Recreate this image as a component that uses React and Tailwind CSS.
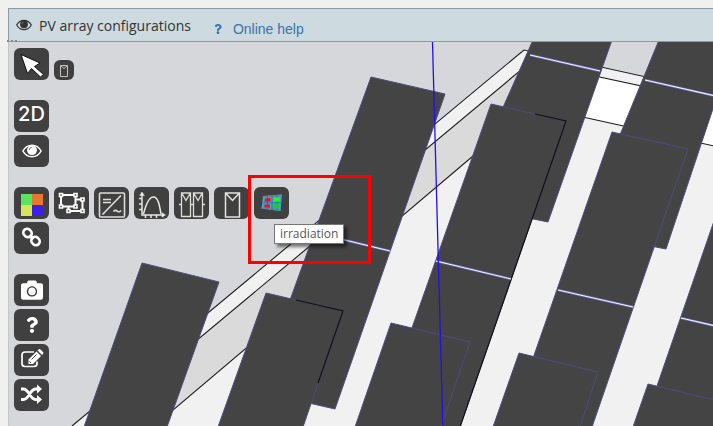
import { FaCamera, FaQuestion } from 'react-icons/fa';

const tables = [
    { points: '533,40 612,40 548,222 460,204', seam: [530, 55, 600, 71] },
    { points: '659,40 736,40 666,249 580,232', seam: [645, 80, 720, 97] },
    { points: '714,221 800,240 740,420 657,386', seam: [681, 318, 750, 334] },
    { points: '371,77 445,94 335,409 257,391', seam: [316, 233, 390, 251] },
    { points: '491,104 566,121 460,427 377,427', seam: [436, 261, 511, 279], dark: '535,114 566,121 460,427' },
    { points: '612,132 688,149 592,427 509,427', seam: [558, 290, 633, 307] },
    { points: '142,263 219,282 167,427 84,427' },
    { points: '266,293 343,311 303,427 218,427', dark: '296,300 343,311 318,383' },
    { points: '391,323 470,342 441,427 355,427' },
    { points: '519,353 598,372 580,427 493,427' },
    { points: '648,384 760,411 754,427 633,427' },
];

function RoofScene() {
    return (
        <svg
            className="absolute inset-0 h-full w-full"
            viewBox="9 42 704 384"
            preserveAspectRatio="xMinYMin slice"
            role="img"
            aria-label="PV array 3D view"
        >
            {/* roof surfaces */}
            <polygon points="524,50 72,426 713,426 800,426 800,111" fill="#f1f1f1" />
            <polygon points="524,67 94,426 153,426 524,112" fill="#dadada" />
            <polygon points="560,68 800,120 800,164 560,112" fill="#ffffff" />
            <g fill="none" stroke="#1c1c1c" strokeWidth="1.1">
                <path d="M72 426L524 50L800 111" />
                <path d="M94 426L524 67.5L560 68.5L800 120" />
                <path d="M153 427L473 156L524 112" />
                <path d="M560 112L800 165" />
            </g>

            {/* module tables, back to front */}
            {tables.map((table) => (
                <g key={table.points}>
                    <polygon points={table.points} fill="#444444" stroke="#4b4d80" strokeWidth="1" />
                    {table.dark && <polyline points={table.dark} fill="none" stroke="#101014" strokeWidth="1.2" />}
                    {table.seam && (
                        <g>
                            <line x1={table.seam[0]} y1={table.seam[1]} x2={table.seam[2]} y2={table.seam[3]} stroke="#6468ad" strokeWidth="2.4" />
                            <line x1={table.seam[0]} y1={table.seam[1]} x2={table.seam[2]} y2={table.seam[3]} stroke="#f4f4ff" strokeWidth="1.1" />
                        </g>
                    )}
                </g>
            ))}

            {/* north axis */}
            <path d="M432.5 42L437.5 230L442.8 426" fill="none" stroke="#2410e0" strokeWidth="1.3" />
        </svg>
    );
}

function ToolButton({ label, children }) {
    return (
        <button type="button" aria-label={label} className="flex h-8 w-[35px] shrink-0 cursor-pointer items-center justify-center rounded-md bg-[#404040] text-white">
            {children}
        </button>
    );
}

function CursorIcon() {
    return (
        <svg viewBox="0 0 35 32" className="h-8 w-[35px]">
            <path d="M7 6.5L26 15L20.5 18.5L29.5 26.5L26.500 29L17.500 20.500L13.500 25.500Z" fill="#fff" stroke="#111" strokeWidth="1" strokeLinejoin="round" />
        </svg>
    );
}

function EyeIcon({ className }) {
    return (
        <svg viewBox="0 0 20 14" className={className}>
            <path d="M.9 7C3 3.2 6.2 1.2 10 1.2S17 3.2 19.1 7C17 10.8 13.8 12.8 10 12.8S3 10.8 .9 7Z" fill="none" stroke="currentColor" strokeWidth="1.5" />
            <circle cx="10" cy="6.2" r="4.9" fill="currentColor" />
            <path d="M7.3 6A2.8 2.8 0 0 1 9.9 3.4" fill="none" stroke="#777" strokeWidth="1" />
        </svg>
    );
}

function PaletteIcon() {
    return (
        <svg viewBox="0 0 35 32" className="h-8 w-[35px]">
            <path d="M7 7h11v11H7z" fill="#58e55e" />
            <path d="M18 7h11v11H18z" fill="#e5792f" />
            <path d="M7 18h11v11H7z" fill="#d8e558" />
            <path d="M18 18h11v11H18z" fill="#3c20e5" />
        </svg>
    );
}

function GroupIcon() {
    return (
        <svg viewBox="0 0 35 32" className="h-8 w-[35px]" fill="none" stroke="#fff">
            <path d="M7 8H21.5V19.500H7ZM21.500 12.500H28.500V24H14.500V19.500" strokeWidth="2" />
            <g fill="#404040" strokeWidth="1.6">
                <path d="M5.500 6.500h3v3h-3zM20 6.500h3v3h-3zM5.500 18h3v3h-3zM20 18h3v3h-3zM27 11h3v3h-3zM27 22.500h3v3h-3zM13 22.500h3v3h-3z" />
            </g>
        </svg>
    );
}

function InverterIcon() {
    return (
        <svg viewBox="0 0 35 32" className="h-8 w-[35px]" fill="none" stroke="#deded8" strokeWidth="1.6">
            <rect x="5.5" y="6" width="25" height="24" rx="1" />
            <path d="M8.5 27.5L27 8.5M9 12.5H17M9 15.5H17" />
            <path d="M19.5 24.5C21 22.5 22.5 23.5 23.5 24.3S26 25 27 23.5" />
        </svg>
    );
}

function CurveIcon() {
    return (
        <svg viewBox="0 0 35 32" className="h-8 w-[35px]" fill="none" stroke="#e8e8e2" strokeWidth="1.5">
            <path d="M8 6V28H30M5 11.5H8M5 17H8M5 22.5H8M11.5 28V31M17 28V31M22.5 28V31" />
            <path d="M5.7 8.5L8 5L10.3 8.5ZM28 25.8L31.5 28L28 30.2Z" fill="#e8e8e2" strokeWidth=".5" />
            <path d="M9.5 27C12 17 15 10 19.5 10S25.5 18 27 27" />
        </svg>
    );
}

function StringIcon() {
    return (
        <svg viewBox="0 0 35 32" className="h-8 w-[35px]" fill="none" stroke="#deded8" strokeWidth="1.3">
            <path d="M7.5 6H16.5V29.5H7.5ZM19.5 6H28.5V29.5H19.5ZM8 6.5L12 13.5L16 6.5M20 6.5L24 13.5L28 6.5M5 17.5H7.5M16.5 17.5H19.5M28.5 17.5H31" />
        </svg>
    );
}

function ModuleIcon() {
    return (
        <svg viewBox="0 0 35 32" className="h-8 w-[35px]" fill="none" stroke="#e4e4e0" strokeWidth="1.5">
            <path d="M11.5 6H25.5V30H11.5ZM12 6.5L18.5 13.5L25 6.5" />
        </svg>
    );
}

function SmallModuleIcon() {
    return (
        <svg viewBox="0 0 20 20" className="h-5 w-5" fill="none" stroke="#c4c4c4" strokeWidth="1">
            <path d="M6.5 5.5H13.5V16.5H6.5ZM7 6L10 8.5L13 6" />
        </svg>
    );
}

function IrradiationIcon() {
    return (
        <svg viewBox="0 0 35 32" className="h-8 w-[35px]">
            <path d="M9 9L28 7.5L26.5 24L7.500 21.500Z" fill="#3fa9cf" />
            <path d="M9 9L28 7.500L27.800 9.500L8.800 10.500ZM7.700 20L26.700 22.500L26.500 24L7.500 21.500Z" fill="#6585a3" />
            <path d="M13.5 9V22M18 8.500V23M23 8V23.500M8.500 15.800H27.300" stroke="#2e6f92" strokeWidth=".8" />
            <path d="M11 11.500L16.500 11V14.500L10.500 14.800ZM10.500 17.500H16V20.800L10.200 20.300Z" fill="#f00f2b" />
            <path d="M19.500 10.800L25.800 10.200L25.500 14L19.500 14.400Z" fill="#28f02d" />
            <path d="M19.500 17L25.300 17.300L24.800 21.500L19.300 21Z" fill="#1fc927" />
        </svg>
    );
}

function ChainIcon() {
    return (
        <svg viewBox="0 0 35 32" className="h-8 w-[35px]" fill="none" stroke="#fff" strokeWidth="2.6">
            <rect x="-4.4" y="-3.8" width="8.8" height="7.6" rx="3.8" transform="translate(13.5 11) rotate(43)" />
            <rect x="-4.4" y="-3.8" width="8.8" height="7.6" rx="3.8" transform="translate(21.5 19) rotate(43)" />
            <path d="M15.5 13L19.5 17" />
        </svg>
    );
}

function EditIcon() {
    return (
        <svg viewBox="0 0 35 32" className="h-8 w-[35px]">
            <path d="M20 8H11Q8 8 8 11V19.5Q8 22.5 11 22.5H20Q23 22.5 23 19.5V17.5" fill="none" stroke="#fff" strokeWidth="1.7" />
            <path d="M14.5 20V15.5L22.5 7.5L27 12L19 20Z" fill="#fff" />
            <path d="M23.5 6.5L24.5 5.5Q25.5 4.5 26.5 5.5L29 8Q30 9 29 10L28 11Z" fill="#fff" />
            <path d="M17.5 15.5L22.5 10.5M15.5 17.5L17 19" stroke="#404040" strokeWidth="1" />
        </svg>
    );
}

function ShuffleIcon() {
    return (
        <svg viewBox="0 0 35 32" className="h-8 w-[35px]" fill="none" stroke="#fff" strokeWidth="2.8">
            <path d="M7 10H9.5C15 10 16 20.5 21.5 20.5H24M7 20.5H9.5C15 20.5 16 10 21.5 10H24" />
            <path d="M23 5.5L28 10L23 14.5ZM23 16L28 20.5L23 25Z" fill="#fff" stroke="none" />
        </svg>
    );
}

export default function App() {
    return (
        <div className="flex min-h-screen flex-col overflow-hidden bg-[#f0f0ef] pt-2 pl-2 font-['Open_Sans',sans-serif]">
            <header className="relative flex h-[34px] items-center border-y border-l border-[#8b9da3] bg-[#cddbe0] pl-[7px] text-[#333]">
                <EyeIcon className="h-3 w-4" />
                <h1 className="ml-[7px] pt-0.5 text-sm">PV array configurations</h1>
                <a href="#help" className="ml-[22px] flex items-center gap-2.5 pt-2 font-['Liberation_Sans',sans-serif] text-sm text-[#3a73af]">
                    <FaQuestion size={10} />
                    Online help
                </a>
                <span className="absolute -bottom-px -left-0.5 w-2.5 border-b-2 border-dotted border-[#888]" />
            </header>

            <main className="relative flex-1 overflow-hidden border-l border-[#c4c6ca] bg-[#d6d7db]">
                <RoofScene />

                <div className="relative flex flex-col gap-5 px-[5px] pt-1.5">
                    <div className="flex items-end gap-[5px]">
                        <ToolButton label="Select"><CursorIcon /></ToolButton>
                        <button type="button" aria-label="Module" className="h-5 w-5 cursor-pointer rounded-md bg-[#404040]">
                            <SmallModuleIcon />
                        </button>
                    </div>

                    <div className="flex flex-col gap-[3px]">
                        <ToolButton label="2D view">
                            <span className="pb-1 font-['Inter',sans-serif] text-xl font-medium">2D</span>
                        </ToolButton>
                        <ToolButton label="Visibility"><EyeIcon className="h-3.5 w-5" /></ToolButton>
                    </div>

                    <div className="flex flex-col gap-[3px]">
                        <div className="flex gap-[5px]">
                            <ToolButton label="Colors"><PaletteIcon /></ToolButton>
                            <ToolButton label="Group"><GroupIcon /></ToolButton>
                            <ToolButton label="Inverter"><InverterIcon /></ToolButton>
                            <ToolButton label="MPPT"><CurveIcon /></ToolButton>
                            <ToolButton label="Strings"><StringIcon /></ToolButton>
                            <ToolButton label="Modules"><ModuleIcon /></ToolButton>
                            <div className="relative">
                                <ToolButton label="irradiation"><IrradiationIcon /></ToolButton>
                                <span role="tooltip" className="absolute top-[37px] left-5 border border-[#767676] bg-white px-[5px] text-xs leading-[18px] text-[#575757] shadow-[3px_3px_3px_rgba(0,0,0,0.5)]">
                                    irradiation
                                </span>
                                <div className="pointer-events-none absolute -top-3 -left-1.5 h-[89px] w-[123px] border-3 border-[#ff0000]" />
                            </div>
                        </div>
                        <ToolButton label="Link"><ChainIcon /></ToolButton>
                    </div>

                    <div className="flex flex-col gap-[3px]">
                        <ToolButton label="Screenshot"><FaCamera size={22} /></ToolButton>
                        <ToolButton label="Help"><FaQuestion size={16} /></ToolButton>
                        <ToolButton label="Edit"><EditIcon /></ToolButton>
                        <ToolButton label="Shuffle"><ShuffleIcon /></ToolButton>
                    </div>
                </div>
            </main>
        </div>
    );
}
